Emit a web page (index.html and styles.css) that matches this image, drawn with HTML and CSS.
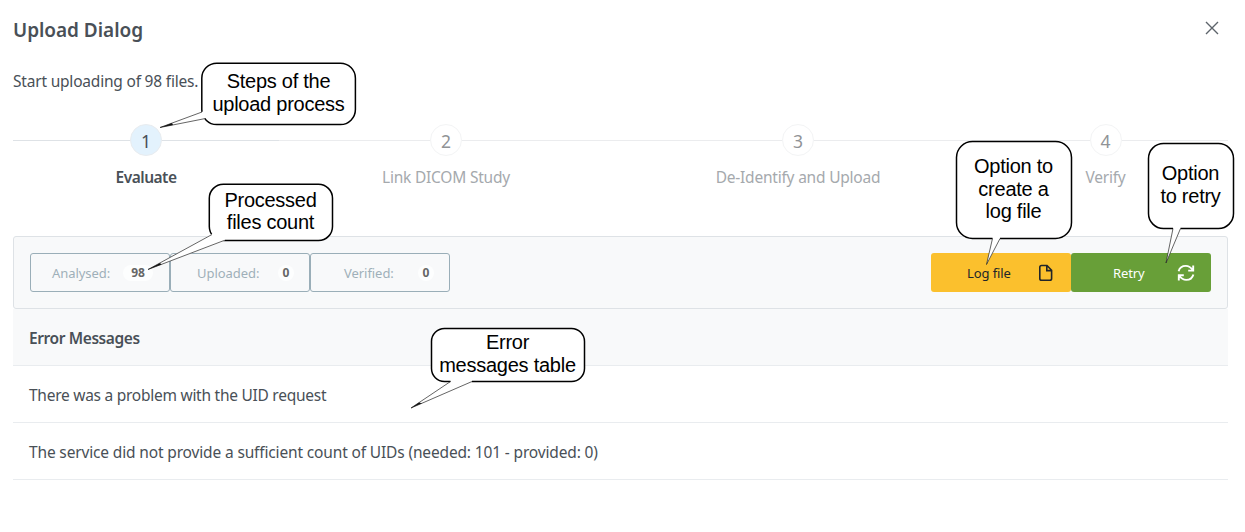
FILE: index.html
```html
<!DOCTYPE html>
<html lang="en">
<head>
<meta charset="utf-8">
<title>Upload Dialog</title>
<link rel="stylesheet" href="styles.css">
</head>
<body>
<main class="dialog">
  <header class="dialog-header">
    <h1 class="dialog-title"><span>Upload Dialog</span></h1>
    <button class="close" aria-label="Close"><svg width="14" height="14" viewBox="0 0 14 14"><path d="M1 1 13 13M13 1 1 13"/></svg></button>
  </header>
  <p class="intro">Start uploading of 98 files.</p>
  <ol class="steps">
    <li class="step active"><span class="num">1</span><span class="label">Evaluate</span></li>
    <li class="step"><span class="num">2</span><span class="label">Link DICOM Study</span></li>
    <li class="step"><span class="num">3</span><span class="label">De-Identify and Upload</span></li>
    <li class="step"><span class="num">4</span><span class="label">Verify</span></li>
  </ol>
  <section class="toolbar">
    <div class="group">
      <div class="counter"><span>Analysed:</span><b class="badge wide">98</b></div>
      <div class="counter"><span>Uploaded:</span><b class="badge">0</b></div>
      <div class="counter"><span>Verified:</span><b class="badge">0</b></div>
    </div>
    <div class="group">
      <button class="btn log"><span>Log file</span><svg width="16" height="18" viewBox="0 0 16 18"><path d="M3.600 1.500H9L13.600 6.300V14.400Q13.600 16.200 11.800 16.200H3.600Q1.800 16.200 1.800 14.400V3.300Q1.800 1.500 3.600 1.500ZM8.800 1.800V6.600H13.400"/></svg></button>
      <button class="btn retry"><span>Retry</span><svg width="18" height="18" viewBox="0 0 18 18"><path d="M1.600 7.200C2.600 3.800 5.400 1.900 8.800 1.900C12 1.900 14.200 3.800 16 6.300M16.200 1.600V6.600H11.200M16.400 10.400C15.400 14 12.600 15.900 9.200 15.900C6 15.900 3.800 14 2 11.500M1.800 16.400V11.300H6.800"/></svg></button>
    </div>
  </section>
  <section class="table">
    <div class="row head"><span>Error Messages</span></div>
    <div class="row"><span>There was a problem with the UID request</span></div>
    <div class="row long"><span>The service did not provide a sufficient count of UIDs (needed: 101 - provided: 0)</span></div>
  </section>
</main>
<svg class="bubbles" width="1245" height="532" viewBox="0 0 1245 532">
  <g class="body">
    <rect x="201.800" y="63.200" width="153.600" height="61.400" rx="15"/>
    <rect x="209.300" y="184.300" width="123.200" height="56.200" rx="14"/>
    <rect x="431.500" y="328.400" width="153" height="53.200" rx="13"/>
    <rect x="956.500" y="141.500" width="115" height="97" rx="16"/>
    <rect x="1148.500" y="143.500" width="85" height="85" rx="15"/>
  </g>
  <g class="tail-fill">
    <path d="M203 111.500 160 127.500 204.500 118.500 208 117Z"/>
    <path d="M212.500 233.500 148 269.500 224 241.300 226 237Z"/>
    <path d="M450.500 382.400 411 408 472 382.400 472 379 450.500 379Z"/>
    <path d="M992.500 239.300 986.500 264.500 1000 239.300 1000 236 992.500 236Z"/>
    <path d="M1173 229.300 1166 263 1180.500 229.300 1180.500 226 1173 226Z"/>
  </g>
  <g class="tail">
    <path d="M202 112 160 127.500 204.500 118.700"/>
    <path d="M212 234.500 148 269.500 224 240.500"/>
    <path d="M450.500 381.500 411 408 472 381.500"/>
    <path d="M992.500 238.500 986.500 264.500 1000 238.500"/>
    <path d="M1173 228.500 1166 263 1180.500 228.500"/>
  </g>
  <g class="tip">
    <path d="M160 127.500 172 123 173 125Z"/>
    <path d="M148 269.500 160 263 161.500 264.400Z"/>
    <path d="M411 408 419 402.600 422 403.200Z"/>
  </g>
</svg>
<div class="note n1"><span>Steps of the</span><span>upload process</span></div>
<div class="note n2"><span>Processed</span><span>files count</span></div>
<div class="note n3"><span>Error</span><span>messages table</span></div>
<div class="note n4"><span>Option to</span><span>create a</span><span>log file</span></div>
<div class="note n5"><span>Option</span><span>to retry</span></div>
</body>
</html>
```
FILE: styles.css
```css
* { box-sizing: border-box; }
body { margin: 0; width: 1245px; height: 532px; overflow: hidden; position: relative; background: #fff; color: #495057; font: 15.5px/22px "Noto Sans", sans-serif; }
.dialog { padding: 0 17px 0 13px; }
.dialog-header { height: 60px; display: flex; justify-content: space-between; align-items: center; }
.dialog-title { margin: 0; font-size: 19px; line-height: 26px; font-weight: 600; letter-spacing: -0.04px; }
.close { border: 0; background: none; width: 32px; height: 32px; padding: 0; margin-top: -4px; display: grid; place-items: center; }
.close svg { fill: none; stroke: #5d646b; stroke-width: 1.4; }
.intro { margin: 10px 0 0; height: 22px; letter-spacing: -0.2px; }
.steps { list-style: none; margin: 32px 0 0; padding: 0; display: grid; grid-template-columns: 266px 334px 370px 245px; }
.step { display: flex; flex-direction: column; align-items: center; height: 112px; background: linear-gradient(#ebecee, #ebecee) 0 16px / 100% 1px no-repeat; color: #a5a9ad; }
.step.active { background-image: linear-gradient(#dee2e6, #dee2e6); color: #495057; font-weight: 600; }
.num { width: 32px; height: 32px; border: 1px solid #f3f4f5; border-radius: 50%; background: #fff; font-size: 17.5px; line-height: 33px; text-align: center; color: #909396; font-weight: 400; }
.active .num { background: #e3f2fd; border-color: #e9ecef; color: #495057; }
.label { margin-top: 10px; letter-spacing: -0.21px; }
.active .label { letter-spacing: -0.5px; }
.toolbar { height: 73px; border: 1px solid #dee2e6; border-radius: 3px; background: #f8f9fa; padding: 16px; display: flex; justify-content: space-between; }
.group { display: flex; height: 39px; }
.counter { width: 140px; height: 39px; border: 1px solid #9aaeb8; border-radius: 3px; padding: 1px 15px 0 21px; display: flex; align-items: center; justify-content: space-between; font-size: 13px; letter-spacing: -0.05px; color: #9fb0b9; }
.counter:nth-child(2) { padding-left: 26px; }
.counter:nth-child(3) { padding-left: 33px; }
.badge { width: 16px; height: 16px; border-radius: 10px; background: #fdfefe; color: #666; font-size: 12px; line-height: 16px; text-align: center; }
.badge.wide { width: 30px; margin-right: 1px; }
.btn { width: 140px; height: 39px; border: 0; border-radius: 3px; padding: 0 16px 0 36px; display: flex; align-items: center; justify-content: space-between; font: 13px/18px "Noto Sans", sans-serif; letter-spacing: -0.1px; }
.btn svg { fill: none; stroke: currentColor; stroke-width: 1.6; }
.log { background: #fbc02d; color: #212529; padding-right: 17px; }
.retry { background: #689f38; color: #fff; padding-left: 42px; }
.retry svg { stroke-width: 1.9; }
.row { height: 57px; padding: 2px 16px 0; border-bottom: 1px solid #e9ecef; display: flex; align-items: center; letter-spacing: -0.26px; }
.head { background: #f8f9fa; font-weight: 600; letter-spacing: -0.4px; }
.long { letter-spacing: -0.15px; }
.bubbles { position: absolute; left: 0; top: 0; }
.body { fill: #fff; stroke: #000; stroke-width: 1.5; }
.tail-fill { fill: #fff; }
.tail { fill: none; stroke: #222; stroke-width: .7; }
.tip { fill: #111; }
.note { position: absolute; display: flex; flex-direction: column; align-items: center; color: #000; font: 20px/22px "Liberation Sans", Arial, sans-serif; letter-spacing: -0.25px; white-space: nowrap; }
.n1 { left: 202px; top: 70px; width: 153px; line-height: 23px; }
.n2 { left: 209px; top: 189px; width: 123px; }
.n3 { left: 431px; top: 331px; width: 153px; line-height: 23px; }
.n4 { left: 956px; top: 155px; width: 115px; line-height: 22.500px; }
.n5 { left: 1148px; top: 162px; width: 85px; line-height: 23px; }
```
